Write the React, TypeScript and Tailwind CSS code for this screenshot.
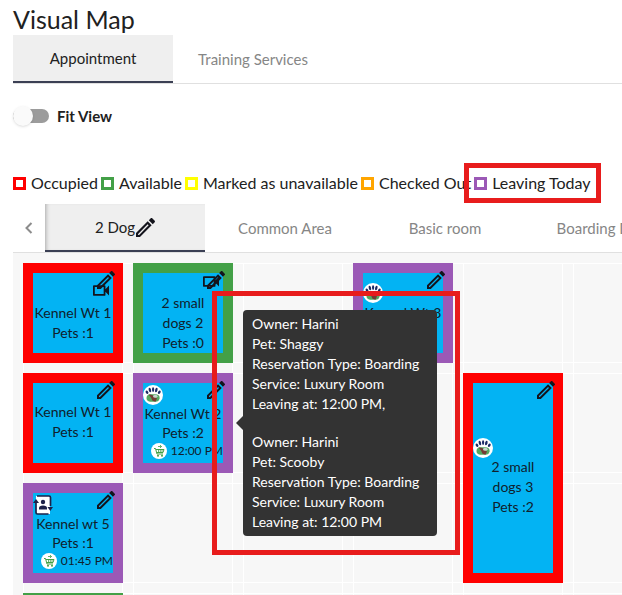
import { type ReactNode } from "react";

type Status = "occupied" | "available" | "leaving";

const borderByStatus: Record<Status, string> = {
  occupied: "border-[#ff0000]",
  available: "border-[#43a047]",
  leaving: "border-[#9b59b6]",
};

const legend = [
  { label: "Occupied", color: "border-[#ff0000]" },
  { label: "Available", color: "border-[#43a047]" },
  { label: "Marked as unavailable", color: "border-[#ffff00]" },
  { label: "Checked Out", color: "border-[#ffa500]" },
  { label: "Leaving Today", color: "border-[#9b59b6]" },
];

const reservations = [
  { owner: "Harini", pet: "Shaggy", type: "Boarding", service: "Luxury Room", leaving: "12:00 PM," },
  { owner: "Harini", pet: "Scooby", type: "Boarding", service: "Luxury Room", leaving: "12:00 PM" },
];

function PencilIcon({ className = "size-[18px]" }: { className?: string }) {
  return (
    <svg viewBox="3 3 18 18" className={`block ${className}`} fill="#14141c">
      <path d="M14.06 9.02l.92.92L5.92 19H5v-.92l9.06-9.06M17.66 3c-.25 0-.51.1-.7.29l-1.83 1.83 3.75 3.75 1.83-1.83c.39-.39.39-1.02 0-1.41l-2.34-2.34c-.2-.2-.45-.29-.71-.29zm-3.6 3.19L3 17.25V21h3.75L17.81 9.94l-3.75-3.75z" />
    </svg>
  );
}

function CameraIcon() {
  return (
    <svg viewBox="3 6 18 12" className="block h-[11px] w-4" fill="#14141c">
      <path d="M15 8v8H5V8h10m1-2H4c-.55 0-1 .45-1 1v10c0 .55.45 1 1 1h12c.55 0 1-.45 1-1v-3.5l4 4v-11l-4 4V7c0-.55-.45-1-1-1z" />
    </svg>
  );
}

function PawIcon() {
  return (
    <svg viewBox="0 0 20 20" className="block size-5">
      <circle cx="10" cy="10" r="10" fill="#fff" />
      <g fill="#1a2a66">
        <ellipse cx="4" cy="7.2" rx="1.2" ry="1.8" transform="rotate(-35 4 7.2)" />
        <ellipse cx="6.9" cy="5" rx="1.2" ry="2.4" transform="rotate(-14 6.9 5)" />
        <ellipse cx="10.1" cy="4.6" rx="1.1" ry="2.3" />
        <ellipse cx="13.3" cy="5" rx="1.2" ry="2.4" transform="rotate(14 13.3 5)" />
        <ellipse cx="16.3" cy="7.2" rx="1.2" ry="1.8" transform="rotate(35 16.3 7.2)" />
      </g>
      <path d="M3.5 13Q3.5 9.5 7.5 9.2H13Q17 9.8 16.6 13.2Q16 16.8 12.500 16.8H7Q3.5 16.300 3.500 13Z" fill="#55a860" />
      <path d="M5.500 9.600Q9 9 11 11.500L14 13.500 12.500 16.800 9.500 15.800 8 12.500Z" fill="#753c35" />
      <ellipse cx="12.300" cy="11.200" rx="2.200" ry="1.500" fill="#c5d4cf" />
    </svg>
  );
}

function CartIcon() {
  return (
    <svg viewBox="0 0 16 16" className="block size-4">
      <circle cx="8" cy="8" r="8" fill="#fff" />
      <g fill="none" stroke="#43a047">
        <path d="M3 5.5H4.500L6 11H12M5 6.500H13L12 9.500H5.800" />
        <path d="M7.500 6.500V9.500M9.300 6.500V9.500M11 6.500V9.500M7 3.500H10.500M9 2 10.500 3.500 9 5" strokeWidth=".8" />
      </g>
      <circle cx="7" cy="12.700" r="1" fill="#43a047" />
      <circle cx="11" cy="12.700" r="1" fill="#43a047" />
    </svg>
  );
}

function ContactIcon() {
  return (
    <svg viewBox="0 0 20 20" className="block size-5">
      <path d="M3 1H17V19H3Z" fill="#fff" />
      <path d="M4 1H16Q17.500 1 17.500 2.500V11M3 7V17.500Q3 19 4.500 19H15.500" fill="none" stroke="#1c2149" strokeWidth="1.700" />
      <path d="M0 8 3 4 6 8ZM14.500 12H20L17.300 16Z" fill="#1c2149" />
      <circle cx="10" cy="7" r="2.200" fill="#1c2149" />
      <path d="M6 14.500V13Q6 10.500 10 10.500T14 13V14.500Z" fill="#1c2149" />
    </svg>
  );
}

function Kennel({
  status,
  lines = [],
  badge,
  camera,
  time,
  tall,
  align = "pt-5",
  children,
}: {
  status: Status;
  lines?: string[];
  badge?: ReactNode;
  camera?: string;
  time?: string;
  tall?: boolean;
  align?: string;
  children?: ReactNode;
}) {
  return (
    <div
      className={`relative border-10 bg-[#03b3f3] text-[14px] text-[#10202c] ${borderByStatus[status]} ${tall ? "row-span-2" : ""}`}
    >
      <button aria-label="Edit kennel" className="absolute -top-[2px] -right-[2px] z-10">
        <PencilIcon />
      </button>
      {camera && <span className={`absolute ${camera}`}><CameraIcon /></span>}
      {badge}
      <div className={`text-center ${align} ${time ? "leading-[19px]" : "leading-5"}`}>
        {lines.map((line) => (
          <div key={line} className="whitespace-nowrap">{line}</div>
        ))}
      </div>
      {time && (
        <div className="flex items-center justify-end gap-1 text-[12px] leading-[18px] whitespace-nowrap">
          <CartIcon />
          {time}
        </div>
      )}
      {children}
    </div>
  );
}

function ReservationTooltip() {
  return (
    <div className="absolute -top-[73px] left-[100px] z-20">
      <div role="tooltip" className="relative w-[194px] rounded bg-[#333333] px-[9px] py-1 text-[14px] text-white">
        <span className="absolute top-[105px] -left-[7px] border-y-8 border-r-8 border-y-transparent border-r-[#333333]" />
        <div className="space-y-[18px]">
          {reservations.map((r) => (
            <div key={r.pet} className="leading-5 whitespace-nowrap">
              <div>Owner: {r.owner}</div>
              <div>Pet: {r.pet}</div>
              <div>Reservation Type: {r.type}</div>
              <div>Service: {r.service}</div>
              <div>Leaving at: {r.leaving}</div>
            </div>
          ))}
        </div>
      </div>
      <div className="pointer-events-none absolute -top-[19px] -right-[23px] -bottom-[19px] -left-[31px] border-5 border-[#e81c1c]" />
    </div>
  );
}

export default function App() {
  return (
    <main className="flex h-screen flex-col overflow-hidden bg-white pl-[13px] font-['Lato',sans-serif] text-[#212121]">
      <h1 className="pt-[3px] text-[25px] leading-8">Visual Map</h1>
      <nav className="flex h-[49px] shrink-0 border-b border-[#e0e0e0] text-[15px]">
        <button className="h-12 w-40 border-b-2 border-[#3b4054] bg-[#efefef]">Appointment</button>
        <button className="h-12 w-40 text-[#868686]">Training Services</button>
      </nav>

      <label className="mt-5 flex h-6 items-center gap-2 text-[15px] font-bold">
        <span className="relative flex h-5 w-9 items-center">
          <input type="checkbox" role="switch" className="peer absolute inset-0 z-10 opacity-0" />
          <span className="h-[14px] w-full rounded-full bg-[#9c9c9c]" />
          <span className="absolute left-0 size-5 rounded-full bg-[#fafafa] shadow peer-checked:left-4" />
        </span>
        Fit View
      </label>

      <ul className="mt-[45px] flex h-5 shrink-0 items-center gap-[3px] text-[16px] whitespace-nowrap">
        {legend.map((item) => (
          <li key={item.label} className="relative flex h-5 items-center gap-[5px]">
            <span className={`size-[13px] border-3 ${item.color}`} />
            {item.label}
            {item.label === "Leaving Today" && (
              <span className="pointer-events-none absolute -inset-[10px] border-5 border-[#e81c1c]" />
            )}
          </li>
        ))}
      </ul>

      <nav className="mt-[11px] flex h-[49px] shrink-0 border-b border-[#e0e0e0] text-[15px] whitespace-nowrap text-[#868686]">
        <button aria-label="Previous rooms" className="flex h-12 w-8 shrink-0 items-center justify-center">
          <svg viewBox="0 0 8 12" className="h-3 w-2" fill="none" stroke="#8c8c8c" strokeWidth="2">
            <path d="M6.5 1 1.5 6 6.5 11" />
          </svg>
        </button>
        <button className="flex h-12 w-40 shrink-0 items-center justify-center gap-px border-b-2 border-[#3b4054] bg-[#efefef] text-[#212121] shadow-[inset_4px_0_4px_-3px_#0000004d]">
          2 Dog
          <PencilIcon className="size-[19px]" />
        </button>
        <button className="h-12 w-40 shrink-0">Common Area</button>
        <button className="h-12 w-40 shrink-0">Basic room</button>
        <button className="h-12 w-40 shrink-0">Boarding Dogs</button>
      </nav>

      <section className="min-h-0 flex-1 overflow-hidden bg-[#f7f7f7] pt-[10px] pl-[10px]">
        <div className="grid auto-rows-[100px] grid-cols-[repeat(5,100px)] gap-[10px] bg-[repeating-linear-gradient(to_right,#fff_0_1px,transparent_1px_99px,#fff_99px_100px,transparent_100px_110px),repeating-linear-gradient(to_bottom,#fff_0_1px,transparent_1px_99px,#fff_99px_100px,transparent_100px_110px)]">
          <Kennel status="occupied" lines={["Kennel Wt 1", "Pets :1"]} align="pt-[30px]" camera="top-3 right-1" />
          <Kennel status="available" lines={["2 small", "dogs 2", "Pets :0"]} camera="top-[3px] right-1" />
          <div />
          <Kennel
            status="leaving"
            lines={["Kennel Wt 3"]}
            badge={<span className="absolute top-[10px] left-0"><PawIcon /></span>}
            align="pt-[30px]"
          />
          <div />
          <Kennel status="occupied" lines={["Kennel Wt 1", "Pets :1"]} align="pt-[19px]" />
          <Kennel
            status="leaving"
            lines={["Kennel Wt 2", "Pets :2"]}
            badge={<span className="absolute top-[2px] left-0"><PawIcon /></span>}
            align="pt-[21px]"
            time="12:00 PM"
          >
            <ReservationTooltip />
          </Kennel>
          <div />
          <div />
          <Kennel
            status="occupied"
            lines={["2 small", "dogs 3", "Pets :2"]}
            badge={<span className="absolute top-[55px] left-0"><PawIcon /></span>}
            align="pt-[74px]"
            tall
          />
          <Kennel
            status="leaving"
            lines={["Kennel wt 5", "Pets :1"]}
            badge={<span className="absolute top-[2px] left-0"><ContactIcon /></span>}
            align="pt-[21px]"
            time="01:45 PM"
          />
          <div />
          <div />
          <div />
          <Kennel status="available" />
        </div>
      </section>
    </main>
  );
}
